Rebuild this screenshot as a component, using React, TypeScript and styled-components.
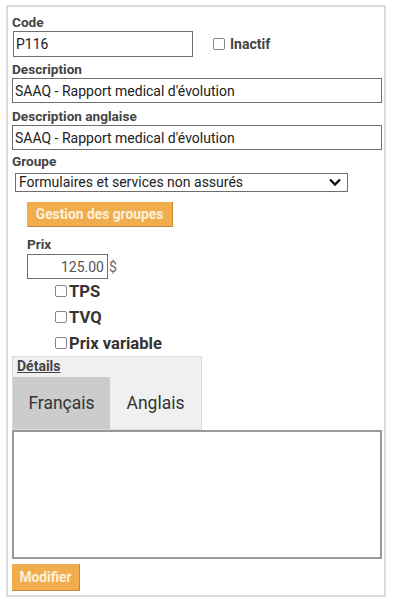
import React from "react";
import styled, { createGlobalStyle } from "styled-components";

const Global = createGlobalStyle`
  html, body { margin: 0; padding: 0; background: #fff; }
  body { font-family: Roboto, "Liberation Sans", Arial, sans-serif; color: #222; }
  * { box-sizing: border-box; }
`;

const Panel = styled.form`
  margin: 5px 0 0 6px;
  width: 380px;
  height: 592px;
  border: 2px solid #dcdcdc;
  padding: 0 0 0 4px;
  display: flex;
  flex-direction: column;
  align-items: flex-start;
`;

const Label = styled.label<{ $mt?: number; $ml?: number }>`
  display: block;
  font: 700 13.6px/15px Roboto, "Liberation Sans", sans-serif;
  color: #444;
  margin-top: ${(p) => p.$mt ?? 0}px;
  margin-left: ${(p) => p.$ml ?? 0}px;
`;

const Row = styled.div<{ $mt?: number; $ml?: number }>`
  display: flex;
  align-items: center;
  margin-top: ${(p) => p.$mt ?? 0}px;
  margin-left: ${(p) => p.$ml ?? 0}px;
`;

const TextInput = styled.input<{ $w: number; $h: number; $ml?: number; $right?: boolean }>`
  width: ${(p) => p.$w}px;
  height: ${(p) => p.$h}px;
  margin: 0 0 0 ${(p) => p.$ml ?? 0}px;
  border: 1px solid #6e6e6e;
  padding: 0 ${(p) => (p.$right ? 3 : 2)}px 0 2px;
  font: 400 14px Roboto, "Liberation Sans", sans-serif;
  color: ${(p) => (p.$right ? "#555" : "#222")};
  text-align: ${(p) => (p.$right ? "right" : "left")};
  background: #fff;
  outline: none;
  border-radius: 0;
`;

const Check = styled.input`
  appearance: none;
  width: 12px;
  height: 12px;
  margin: 0;
  border: 1px solid #858585;
  border-radius: 2px;
  background: #fff;
  flex: none;
`;

const InlineCheck = styled.label`
  display: flex;
  align-items: center;
  gap: 5px;
  margin-left: 20px;
  font: 700 14px/15px Roboto, "Liberation Sans", sans-serif;
  color: #444;
`;

const SelectWrap = styled.div`
  position: relative;
  margin: 3px 0 0 3px;
  width: 333px;
  height: 19px;
`;

const Select = styled.select`
  appearance: none;
  width: 100%;
  height: 100%;
  margin: 0;
  border: 1px solid #6e6e6e;
  border-radius: 0;
  padding: 0 0 0 3px;
  font: 400 14px Roboto, "Liberation Sans", sans-serif;
  color: #222;
  background: #fff;
  outline: none;
`;

const Chevron = styled.svg`
  position: absolute;
  right: 6px;
  top: 6px;
  pointer-events: none;
`;

const OrangeButton = styled.button<{ $w: number; $h: number; $mt: number; $ml?: number }>`
  width: ${(p) => p.$w}px;
  height: ${(p) => p.$h}px;
  margin: ${(p) => p.$mt}px 0 0 ${(p) => p.$ml ?? 0}px;
  padding: 0;
  background: #f0ad4e;
  border: none;
  border-right: 1px solid #c98a36;
  border-bottom: 1px solid #c98a36;
  color: #fdf0dc;
  font: 700 13.8px Roboto, "Liberation Sans", sans-serif;
  text-align: center;
`;

const Dollar = styled.span`
  margin-left: 1px;
  font: 400 14px Roboto, "Liberation Sans", sans-serif;
  color: #666;
`;

const CheckList = styled.div`
  margin-top: -1px;
  margin-left: 43px;
  display: flex;
  flex-direction: column;
`;

const CheckRow = styled.label`
  height: 26px;
  display: flex;
  align-items: center;
  gap: 2px;
  font: 700 16.6px Roboto, "Liberation Sans", sans-serif;
  color: #333;
`;

const DetailsBox = styled.div`
  width: 190px;
  background: #f0f0f0;
  border: 1px solid #dcdcdc;
  display: flex;
  flex-direction: column;
`;

const DetailsTitle = styled.span`
  margin: 2px 0 0 4px;
  font: 700 14px/15px Roboto, "Liberation Sans", sans-serif;
  color: #444;
  text-decoration: underline;
`;

const Tabs = styled.div`
  display: flex;
  margin-top: 3px;
`;

const Tab = styled.div<{ $active?: boolean; $w: number }>`
  width: ${(p) => p.$w}px;
  height: 52px;
  display: flex;
  align-items: center;
  justify-content: center;
  background: ${(p) => (p.$active ? "#cccccc" : "#f0f0f0")};
  font: 400 17.5px Roboto, "Liberation Sans", sans-serif;
  color: #333;
`;

const TextArea = styled.textarea`
  width: 370px;
  height: 129px;
  margin: 0;
  border: 2px solid #999;
  resize: none;
  background: #fff;
  outline: none;
`;

export default function App() {
  return (
    <>
      <Global />
      <Panel onSubmit={(e) => e.preventDefault()}>
        <Label $mt={8}>Code</Label>
        <Row $mt={1}>
          <TextInput $w={180} $h={26} $ml={1} defaultValue="P116" />
          <InlineCheck>
            <Check type="checkbox" />
            Inactif
          </InlineCheck>
        </Row>

        <Label $mt={5}>Description</Label>
        <Row $mt={1}>
          <TextInput $w={370} $h={25} defaultValue="SAAQ - Rapport medical d'évolution" />
        </Row>

        <Label $mt={6}>Description anglaise</Label>
        <Row $mt={1}>
          <TextInput $w={370} $h={25} defaultValue="SAAQ - Rapport medical d'évolution" />
        </Row>

        <Label $mt={4}>Groupe</Label>
        <SelectWrap>
          <Select defaultValue="f">
            <option value="f">Formulaires et services non assurés</option>
          </Select>
          <Chevron width="14" height="8" viewBox="0 0 14 8">
            <polyline points="2,1.5 7,6.5 12,1.5" fill="none" stroke="#111" strokeWidth="2.4" />
          </Chevron>
        </SelectWrap>

        <OrangeButton type="button" $w={146} $h={25} $mt={11} $ml={15}>
          Gestion des groupes
        </OrangeButton>

        <Label $mt={10} $ml={15}>Prix</Label>
        <Row $mt={2} $ml={15}>
          <TextInput $w={81} $h={25} $right defaultValue="125.00" />
          <Dollar>$</Dollar>
        </Row>

        <CheckList>
          <CheckRow>
            <Check type="checkbox" />
            TPS
          </CheckRow>
          <CheckRow>
            <Check type="checkbox" />
            TVQ
          </CheckRow>
          <CheckRow>
            <Check type="checkbox" />
            Prix variable
          </CheckRow>
        </CheckList>

        <DetailsBox>
          <DetailsTitle>Détails</DetailsTitle>
          <Tabs>
            <Tab $active $w={97}>Français</Tab>
            <Tab $w={91}>Anglais</Tab>
          </Tabs>
        </DetailsBox>

        <TextArea />

        <OrangeButton type="submit" $w={68} $h={27} $mt={5}>
          Modifier
        </OrangeButton>
      </Panel>
    </>
  );
}
